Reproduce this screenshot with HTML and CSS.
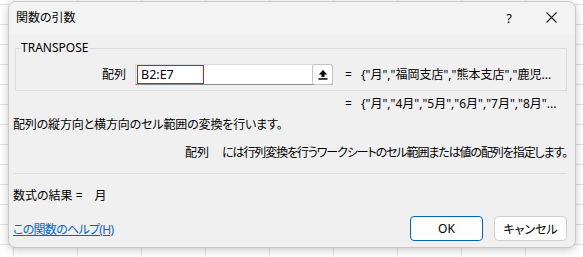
FILE: index.html
```html
<!DOCTYPE html>
<html lang="ja">
<head>
<meta charset="utf-8">
<link rel="stylesheet" href="styles.css">
</head>
<body>
<div class="stage">
  <div class="dialog">
    <div class="titlebar">
      <span class="title">関数の引数</span>
      <span class="help">?</span>
      <span class="close">
        <svg width="11" height="11" viewBox="0 0 11 11"><path d="M0.5 0.5 L10.5 10.5 M10.5 0.5 L0.5 10.5" stroke="#1a1a1a" stroke-width="1.1" fill="none"/></svg>
      </span>
    </div>
    <div class="body">
      <fieldset class="group">
        <legend>TRANSPOSE</legend>
        <div class="argrow">
          <span class="arglabel">配列</span>
          <div class="field">
            <span class="ref">B2:E7</span>
            <span class="pick">
              <svg width="10" height="11" viewBox="0 0 10 11"><path d="M5 1 L9.2 5.6 L6.5 5.6 L6.5 8 L3.5 8 L3.5 5.6 L0.8 5.6 Z" fill="#000"/><rect x="0.5" y="9.2" width="9" height="1.5" fill="#000"/></svg>
            </span>
          </div>
          <span class="eq">=</span>
          <span class="val">{"月","福岡支店","熊本支店","鹿児...</span>
        </div>
      </fieldset>
      <div class="resrow"><span class="eq">=</span><span class="val">{"月","4月","5月","6月","7月","8月"...</span></div>
      <p class="desc">配列の縦方向と横方向のセル範囲の変換を行います。</p>
      <p class="argdesc"><span class="argname">配列</span>には行列変換を行うワークシートのセル範囲または値の配列を指定します。</p>
      <hr class="divider">
      <p class="result">数式の結果 =<span class="resval">月</span></p>
      <div class="footer">
        <a class="helplink" href="#">この関数のヘルプ(H)</a>
        <div class="buttons">
          <button class="btn ok">OK</button>
          <button class="btn">キャンセル</button>
        </div>
      </div>
    </div>
  </div>
</div>
</body>
</html>
```
FILE: styles.css
```css
* { box-sizing: border-box; }
html, body { margin: 0; padding: 0; }
body {
  width: 583px;
  height: 257px;
  overflow: hidden;
  background-color: #ffffff;
  background-image:
    linear-gradient(to right, #e2e2e2 1px, transparent 1px),
    linear-gradient(to bottom, #e2e2e2 1px, transparent 1px);
  background-size: 64px 20px, 64px 20px;
  background-position: 13px 4px, 0 4px;
  font-family: "Noto Sans", "Noto Sans CJK JP", sans-serif;
  font-size: 12px;
  color: #000;
  font-feature-settings: "palt";
}
.stage {
  padding: 1px 7px 9px 8px;
}
.dialog {
  width: 568px;
  height: 247px;
  background: #f0f0f0;
  border: 1px solid #c8c8c8;
  border-radius: 8px;
  box-shadow: 0 2px 8px rgba(0,0,0,0.22);
  overflow: hidden;
  display: flex;
  flex-direction: column;
}
.titlebar {
  height: 33px;
  flex: none;
  background: #f3f3f3;
  display: flex;
  align-items: center;
  padding-left: 7px;
}
.title {
  flex: 1;
  font-size: 12px;
  line-height: 16px;
  margin-top: -2px;
}
.help {
  width: 14px;
  text-align: center;
  margin-right: 30px;
  font-size: 13px;
  margin-top: -2px;
}
.close {
  width: 11px;
  height: 11px;
  margin-right: 18px;
  display: flex;
  margin-top: -2px;
}
.body {
  flex: 1;
  padding: 5px 8px 0 4px;
  display: flex;
  flex-direction: column;
}
.group {
  margin: 0 0 0 2px;
  padding: 8px 0 5px 0;
  border: 1px solid #dcdcdc;
  min-width: 0;
}
.group legend {
  padding: 0 1px;
  margin-left: 4px;
  font-size: 12px;
  line-height: 16px;
  color: #000;
}
.argrow {
  display: flex;
  align-items: center;
  height: 21px;
}
.arglabel {
  width: 110px;
  text-align: right;
  margin-right: 9px;
  line-height: 16px;
}
.field {
  width: 198px;
  height: 21px;
  background: #fff;
  border: 1px solid #dadada;
  border-bottom-color: #8a8a8a;
  display: flex;
  align-items: center;
  padding: 0 0 0 1px;
}
.ref {
  width: 67px;
  height: 19px;
  border: 1px solid #e81123;
  padding-left: 3px;
  line-height: 17px;
  font-size: 12.5px;
}
.pick {
  margin-left: auto;
  width: 21px;
  height: 21px;
  margin-right: -1px;
  background: #fdfdfd;
  border: 1px solid #c4c4c4;
  border-radius: 3px;
  display: flex;
  align-items: center;
  justify-content: center;
}
.eq {
  margin-left: 12px;
  width: 16px;
  line-height: 16px;
}
.val {
  white-space: nowrap;
  line-height: 16px;
}
.resrow {
  display: flex;
  margin-top: 5px;
  padding-left: 320px;
  height: 16px;
  align-items: center;
}
.desc {
  margin: 5px 0 0 0;
  line-height: 16px;
  letter-spacing: -0.15px;
}
.argdesc {
  margin: 12px 0 0 0;
  line-height: 16px;
  text-align: right;
  letter-spacing: -1.1px;
}
.argname {
  margin-right: 13px;
  letter-spacing: 0;
}
.divider {
  margin: 12px 0 0 0;
  border: 0;
  border-top: 1px solid #dcdcdc;
  height: 0;
}
.result {
  margin: 14px 0 0 0;
  line-height: 16px;
}
.resval {
  margin-left: 12px;
}
.footer {
  margin-top: 12px;
  display: flex;
  align-items: center;
  justify-content: space-between;
}
.helplink {
  color: #0066cc;
  text-decoration: underline;
  line-height: 16px;
  margin-top: 2px;
  letter-spacing: -0.7px;
}
.buttons {
  display: flex;
  gap: 11px;
}
.btn {
  width: 73px;
  height: 25px;
  font-family: "Noto Sans", "Noto Sans CJK JP", sans-serif;
  font-feature-settings: "palt";
  font-size: 12px;
  color: #000;
  background: #fdfdfd;
  border: 1px solid #d0d0d0;
  border-radius: 4px;
  padding: 0;
}
.btn.ok {
  border: 1px solid #0067c0;
  box-shadow: inset 0 0 0 1px #ffffff;
}
```
